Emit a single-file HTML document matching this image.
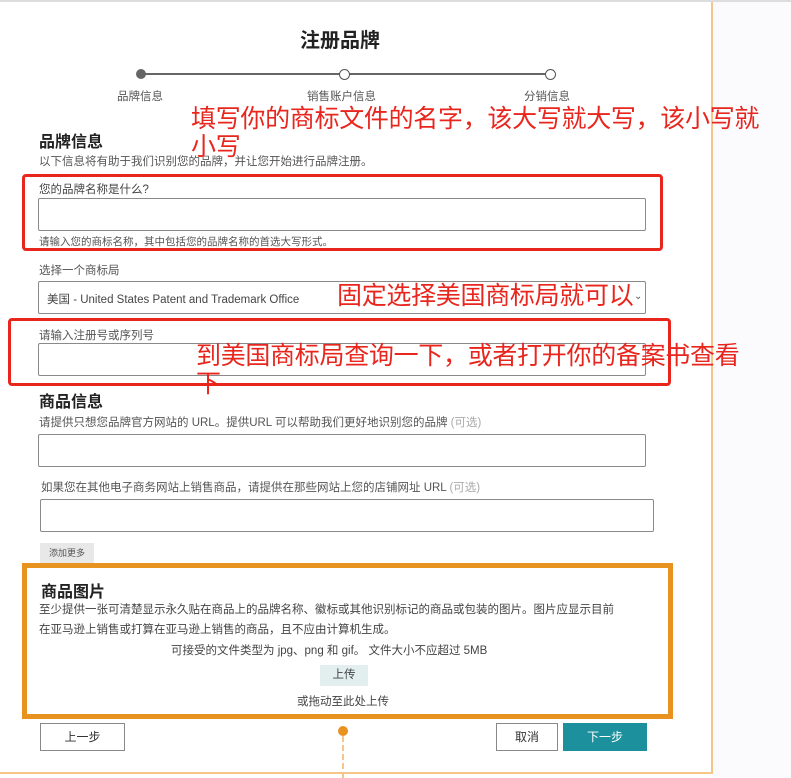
<!DOCTYPE html>
<html><head><meta charset="utf-8"><style>
*{margin:0;padding:0;box-sizing:border-box}
body{width:791px;height:778px;position:relative;background:#fff;font-family:"Liberation Sans","Noto Sans CJK SC",sans-serif;color:#333;overflow:hidden}
.a{position:absolute;white-space:nowrap}
.inp{position:absolute;border:1px solid #8a8a8a;border-radius:2px;background:#fff}
.red{position:absolute;color:#e8261e;font-size:25px;line-height:28px;white-space:nowrap;letter-spacing:-0.3px}
.h{font-size:16px;font-weight:bold;color:#222}
.s{font-size:11.5px;color:#555}
.btn{position:absolute;border:1px solid #888;font-size:12px;text-align:center;line-height:26px;color:#333;background:#fff}
</style></head><body>
<div class="a" style="left:0;top:0;width:791px;height:2px;background:#ddd"></div>
<div class="a" style="left:713px;top:2px;width:78px;height:776px;background:#fbfafd"></div>
<div class="a" style="left:711px;top:2px;width:2px;height:772px;background:#f5c58a"></div>
<div class="a" style="left:0;top:772px;width:713px;height:2px;background:#f5c58a"></div>

<div class="a" style="left:300px;top:24px;font-size:20px;font-weight:bold;color:#222">注册品牌</div>
<div class="a" style="left:141px;top:73px;width:409px;height:2px;background:#666"></div>
<div class="a" style="left:136px;top:69px;width:10px;height:10px;border-radius:50%;background:#666"></div>
<div class="a" style="left:339px;top:69px;width:11px;height:11px;border-radius:50%;background:#fff;border:1px solid #555"></div>
<div class="a" style="left:545px;top:69px;width:11px;height:11px;border-radius:50%;background:#fff;border:1px solid #555"></div>
<div class="a s" style="left:117px;top:88px">品牌信息</div>
<div class="a s" style="left:307px;top:88px">销售账户信息</div>
<div class="a s" style="left:524px;top:88px">分销信息</div>

<div class="a h" style="left:39px;top:128px">品牌信息</div>
<div class="a s" style="left:39px;top:153px">以下信息将有助于我们识别您的品牌，并让您开始进行品牌注册。</div>
<div class="a s" style="left:39px;top:181px;color:#444">您的品牌名称是什么?</div>
<div class="inp" style="left:38px;top:198px;width:608px;height:33px"></div>
<div class="a" style="left:39px;top:234px;font-size:10.5px;color:#555">请输入您的商标名称，其中包括您的品牌名称的首选大写形式。</div>
<div class="a" style="left:22px;top:174px;width:641px;height:77px;border:3px solid #e8261e;border-radius:4px"></div>

<div class="a s" style="left:39px;top:262px">选择一个商标局</div>
<div class="inp" style="left:38px;top:281px;width:608px;height:33px"></div>
<div class="a" style="left:47px;top:291px;font-size:11.5px;color:#444">美国 - United States Patent and Trademark Office</div>
<div class="a" style="left:634px;top:291px;font-size:10px;color:#555">⌄</div>

<div class="a s" style="left:39px;top:327px">请输入注册号或序列号</div>
<div class="inp" style="left:38px;top:343px;width:608px;height:33px"></div>
<div class="a" style="left:8px;top:318px;width:663px;height:68px;border:3px solid #e8261e;border-radius:4px"></div>

<div class="a h" style="left:39px;top:388px">商品信息</div>
<div class="a s" style="left:39px;top:414px">请提供只想您品牌官方网站的 URL。提供URL 可以帮助我们更好地识别您的品牌 <span style="color:#aaa">(可选)</span></div>
<div class="inp" style="left:38px;top:434px;width:608px;height:33px"></div>
<div class="a s" style="left:41px;top:479px">如果您在其他电子商务网站上销售商品，请提供在那些网站上您的店铺网址 URL <span style="color:#aaa">(可选)</span></div>
<div class="inp" style="left:40px;top:499px;width:614px;height:33px"></div>
<div class="a" style="left:40px;top:543px;width:54px;height:21px;background:#e8e8e8;font-size:9px;color:#555;text-align:center;line-height:20px">添加更多</div>

<div class="a" style="left:22px;top:563px;width:651px;height:156px;border:5px solid #e8921f"></div>
<div class="a h" style="left:41px;top:578px">商品图片</div>
<div class="a" style="left:39px;top:600px;font-size:11.5px;color:#444;line-height:20px">至少提供一张可清楚显示永久贴在商品上的品牌名称、徽标或其他识别标记的商品或包装的图片。图片应显示目前<br>在亚马逊上销售或打算在亚马逊上销售的商品，且不应由计算机生成。</div>
<div class="a" style="left:171px;top:642px;font-size:11.5px;color:#444">可接受的文件类型为 jpg、png 和 gif。 文件大小不应超过 5MB</div>
<div class="a" style="left:320px;top:665px;width:48px;height:21px;background:#e2efee;font-size:11.5px;color:#444;text-align:center;line-height:21px">上传</div>
<div class="a" style="left:297px;top:693px;font-size:11.5px;color:#444">或拖动至此处上传</div>

<div class="btn" style="left:40px;top:723px;width:85px;height:28px">上一步</div>
<div class="btn" style="left:496px;top:723px;width:62px;height:28px">取消</div>
<div class="a" style="left:563px;top:723px;width:84px;height:28px;background:#1c909c;color:#fff;font-size:12px;text-align:center;line-height:28px">下一步</div>
<div class="a" style="left:338px;top:726px;width:10px;height:10px;border-radius:50%;background:#e8921f"></div>
<div class="a" style="left:342px;top:736px;width:0;height:42px;border-left:2px dashed #f5c58a"></div>

<div class="red" style="left:191px;top:105px">填写你的商标文件的名字，该大写就大写，该小写就</div>
<div class="red" style="left:191px;top:133px">小写</div>
<div class="red" style="left:337px;top:282px">固定选择美国商标局就可以</div>
<div class="red" style="left:196px;top:342px">到美国商标局查询一下，或者打开你的备案书查看</div>
<div class="red" style="left:196px;top:370px">下</div>
</body></html>
